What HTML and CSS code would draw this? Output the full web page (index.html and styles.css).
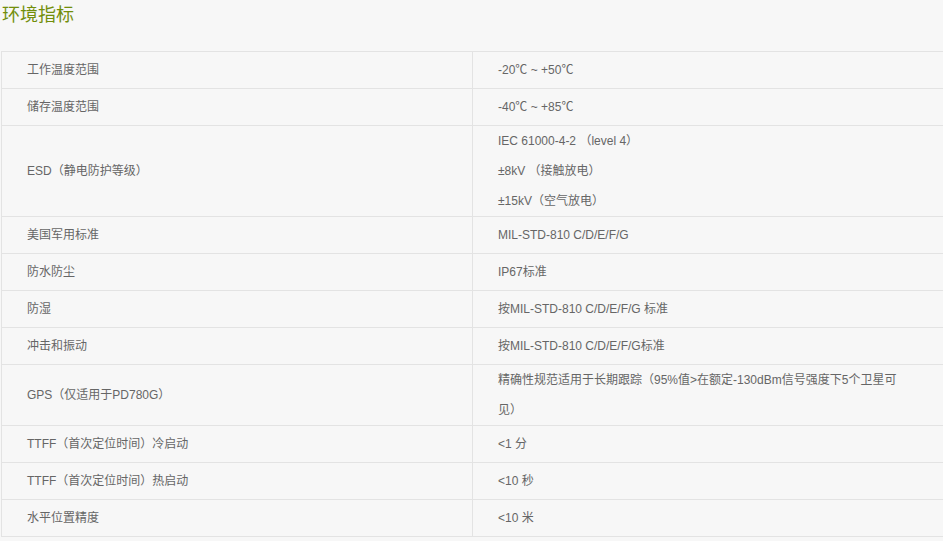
FILE: index.html
```html
<!DOCTYPE html>
<html lang="zh-CN">
<head>
<meta charset="utf-8">
<title>环境指标</title>
<link rel="stylesheet" href="styles.css">
</head>
<body>
<h2 class="title">环境指标</h2>
<table class="spec">
  <colgroup><col class="c1"><col class="c2"></colgroup>
  <tbody>
    <tr><td>工作温度范围</td><td>-20℃ ~ +50℃</td></tr>
    <tr><td>储存温度范围</td><td>-40℃ ~ +85℃</td></tr>
    <tr><td>ESD（静电防护等级）</td><td>IEC 61000-4-2 （level 4）<br>±8kV （接触放电）<br>±15kV（空气放电）</td></tr>
    <tr><td>美国军用标准</td><td>MIL-STD-810 C/D/E/F/G</td></tr>
    <tr><td>防水防尘</td><td>IP67标准</td></tr>
    <tr><td>防湿</td><td>按MIL-STD-810 C/D/E/F/G 标准</td></tr>
    <tr><td>冲击和振动</td><td>按MIL-STD-810 C/D/E/F/G标准</td></tr>
    <tr><td>GPS（仅适用于PD780G）</td><td>精确性规范适用于长期跟踪（95%值&gt;在额定-130dBm信号强度下5个卫星可见）</td></tr>
    <tr><td>TTFF（首次定位时间）冷启动</td><td>&lt;1 分</td></tr>
    <tr><td>TTFF（首次定位时间）热启动</td><td>&lt;10 秒</td></tr>
    <tr><td>水平位置精度</td><td>&lt;10 米</td></tr>
  </tbody>
</table>
</body>
</html>
```
FILE: styles.css
```css
html, body {
  margin: 0;
  padding: 0;
  background: #f7f7f7;
  overflow: hidden;
}
body {
  font-family: "Liberation Sans", Arial, "Noto Sans CJK SC", sans-serif;
  color: #666;
  font-size: 12px;
}
.title {
  margin: 0;
  padding: 1px 0 0 2px;
  font-size: 18px;
  font-weight: normal;
  line-height: 24px;
  color: #728e0a;
  font-family: "Noto Sans CJK SC", "Liberation Sans", sans-serif;
}
.spec {
  margin: 26px 0 0 1px;
  border-collapse: collapse;
  width: 950px;
  table-layout: fixed;
}
.spec .c1 { width: 471px; }
.spec td {
  border: 1px solid #e3e3e3;
  height: 36px;
  padding: 0 10px 0 25px;
  line-height: 30px;
  vertical-align: middle;
  font-size: 12px;
}
.spec td:last-child {
  padding-right: 50px;
}
```
